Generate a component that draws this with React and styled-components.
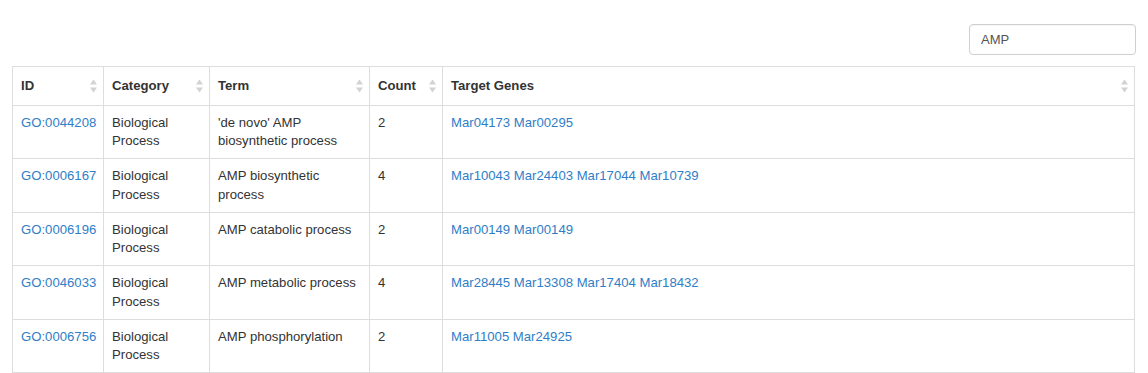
import React from "react";
import styled, { createGlobalStyle } from "styled-components";

const Global = createGlobalStyle`
  html, body { margin: 0; padding: 0; background: #fff; }
  body { font-family: "Liberation Sans", Arial, Helvetica, sans-serif; font-size: 13.15px; color: #333; }
`;

const Page = styled.div`
  padding: 24px 12px 0 12px;
`;

const Toolbar = styled.div`
  display: flex;
  justify-content: flex-end;
  margin-bottom: 11px;
`;

const Search = styled.input`
  box-sizing: border-box;
  width: 167px;
  height: 31px;
  padding: 0 11px;
  border: 1px solid #cfcfcf;
  border-radius: 4px;
  font-family: inherit;
  font-size: 13px;
  color: #555;
  outline: none;
  box-shadow: inset 0 1px 1px rgba(0, 0, 0, 0.04);
`;

const Table = styled.table`
  width: calc(100% - 1px);
  border-collapse: collapse;
  table-layout: fixed;
  border: 1px solid #ddd;
`;

const Th = styled.th`
  position: relative;
  width: ${(p) => (p.$w ? `${p.$w}px` : "auto")};
  box-sizing: border-box;
  text-align: left;
  font-weight: bold;
  line-height: 18.5px;
  padding: 10px 20px 9px 8px;
  border: 1px solid #ddd;
  vertical-align: middle;
`;

const Td = styled.td`
  line-height: 18.5px;
  padding: 8px 8px 7.5px 8px;
  border: 1px solid #ddd;
  vertical-align: top;
`;

const Link = styled.a`
  color: #2f7ec7;
  text-decoration: none;
`;

const SortIcon = styled.svg`
  position: absolute;
  right: 6px;
  top: 50%;
  margin-top: -7px;
  width: 7px;
  height: 14px;
`;

const Sort = () => (
  <SortIcon viewBox="0 0 7 14">
    <polygon points="3.5,0.5 7,5.5 0,5.5" fill="#d2d2d2" />
    <polygon points="0,8.5 7,8.5 3.5,13.5" fill="#d2d2d2" />
  </SortIcon>
);

const columns = [
  { label: "ID", w: 91 },
  { label: "Category", w: 106 },
  { label: "Term", w: 160 },
  { label: "Count", w: 73 },
  { label: "Target Genes" },
];

const rows = [
  { id: "GO:0044208", term: "'de novo' AMP biosynthetic process", count: 2, genes: ["Mar04173", "Mar00295"] },
  { id: "GO:0006167", term: "AMP biosynthetic process", count: 4, genes: ["Mar10043", "Mar24403", "Mar17044", "Mar10739"] },
  { id: "GO:0006196", term: "AMP catabolic process", count: 2, genes: ["Mar00149", "Mar00149"] },
  { id: "GO:0046033", term: "AMP metabolic process", count: 4, genes: ["Mar28445", "Mar13308", "Mar17404", "Mar18432"] },
  { id: "GO:0006756", term: "AMP phosphorylation", count: 2, genes: ["Mar11005", "Mar24925"] },
];

export default function App() {
  return (
    <Page>
      <Global />
      <Toolbar>
        <Search defaultValue="AMP" />
      </Toolbar>
      <Table>
        <thead>
          <tr>
            {columns.map((c) => (
              <Th key={c.label} $w={c.w}>
                {c.label}
                <Sort />
              </Th>
            ))}
          </tr>
        </thead>
        <tbody>
          {rows.map((r) => (
            <tr key={r.id}>
              <Td>
                <Link href="#">{r.id}</Link>
              </Td>
              <Td>Biological Process</Td>
              <Td>{r.term}</Td>
              <Td>{r.count}</Td>
              <Td>
                {r.genes.map((g, i) => (
                  <React.Fragment key={i}>
                    {i > 0 && " "}
                    <Link href="#">{g}</Link>
                  </React.Fragment>
                ))}
              </Td>
            </tr>
          ))}
        </tbody>
      </Table>
    </Page>
  );
}
